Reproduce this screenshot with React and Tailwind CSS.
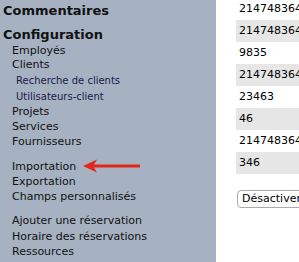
import React from "react";

const rows = ["214748364", "214748364", "9835", "214748364", "23463", "46", "214748364", "346"];

function Arrow() {
  return (
    <svg width="58" height="14" viewBox="0 0 58 14" className="absolute left-[71px] top-[0px]">
      <path d="M0 7 L14 0.5 L11 5.5 L57 5.5 L57 8.5 L11 8.5 L14 13.5 Z" fill="#e3261c" />
    </svg>
  );
}

export default function App() {
  return (
    <div className="flex w-[299px] h-[262px] overflow-hidden bg-white font-['DejaVu_Sans',sans-serif]">
      <div className="w-[216px] shrink-0 bg-[#a6b2c1] pt-[2px] text-[#111]">
        <div className="px-[3px] text-[13px] font-bold leading-[17px]">Commentaires</div>
        <div className="mt-[7px] px-[3px] text-[13px] font-bold leading-[17px]">Configuration</div>
        <div className="pl-[12px] text-[11px] leading-[15px]">
          <div>Employés</div>
          <div className="mt-[-1px]">Clients</div>
          <div className="pl-[4px] text-[10px] leading-[16px] text-[#1a1a4a]">
            <div className="mt-[1px]">Recherche de clients</div>
            <div>Utilisateurs-client</div>
          </div>
          <div className="mt-[-1px]">Projets</div>
          <div>Services</div>
          <div>Fournisseurs</div>
          <div className="relative mt-[10px]">
            Importation
            <Arrow />
          </div>
          <div>Exportation</div>
          <div>Champs personnalisés</div>
          <div className="mt-[9px]">Ajouter une réservation</div>
          <div className="mt-[1px]">Horaire des réservations</div>
          <div>Ressources</div>
        </div>
      </div>
      <div className="flex-1 pl-[20px] mt-[-2px] text-[11px] text-black">
        {rows.map((r, i) => (
          <div
            key={i}
            className={"h-[22px] flex items-center pl-[3px] whitespace-nowrap " + (i % 2 === 1 ? "bg-[#e6e6e6]" : "")}
          >
            {r}
          </div>
        ))}
        <div className="mt-[16px] ml-[1px] h-[18px] w-[80px] flex items-center rounded-[4px] border border-[#aaa] bg-white pl-[4px] whitespace-nowrap">
          Désactiver
        </div>
      </div>
    </div>
  );
}
